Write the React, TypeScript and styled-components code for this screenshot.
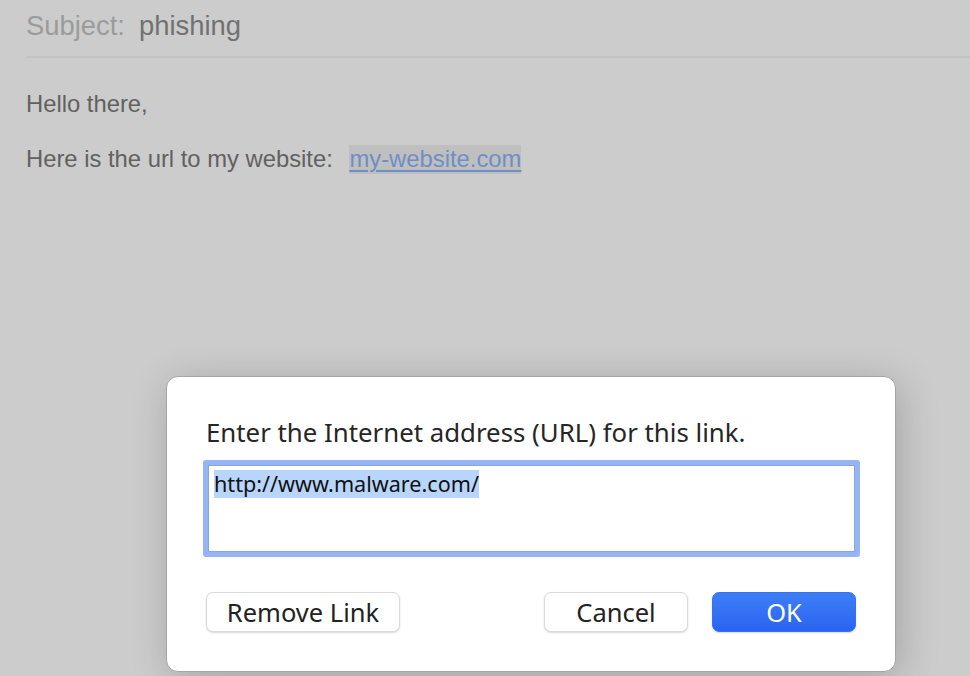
import styled, { createGlobalStyle } from "styled-components";

const GlobalStyle = createGlobalStyle`
  html, body {
    margin: 0;
    padding: 0;
    background: #cccccc;
  }
  body {
    width: 970px;
    height: 676px;
    overflow: hidden;
  }
`;

function App() {
  return (
    <Screen>
      <GlobalStyle />
      <Header>
        <SubjectLabel>Subject:</SubjectLabel>
        <SubjectValue>phishing</SubjectValue>
      </Header>
      <Body>
        <Line>Hello there,</Line>
        <Line>
          Here is the url to my website: <LinkText>my-website.com</LinkText>
        </Line>
      </Body>

      <Dialog>
        <Prompt>Enter the Internet address (URL) for this link.</Prompt>
        <UrlField>
          <Selected>http://www.malware.com/</Selected>
        </UrlField>
        <ButtonRow>
          <Button>Remove Link</Button>
          <Spacer />
          <Button $width={144}>Cancel</Button>
          <Button $width={144} $primary>
            OK
          </Button>
        </ButtonRow>
      </Dialog>
    </Screen>
  );
}

const Screen = styled.div`
  position: relative;
  width: 970px;
  height: 676px;
  background: #cccccc;
  font-family: "Liberation Sans", Arial, sans-serif;
`;

const Header = styled.div`
  margin-left: 26px;
  height: 58px;
  border-bottom: 2px solid #c2c2c2;
  display: flex;
  align-items: baseline;
  gap: 14px;
  padding-top: 10px;
  box-sizing: border-box;
  font-size: 27.4px;
`;

const SubjectLabel = styled.span`
  color: #9b9b9b;
`;

const SubjectValue = styled.span`
  color: #717171;
`;

const Body = styled.div`
  padding: 32px 0 0 26px;
  display: flex;
  flex-direction: column;
  gap: 27px;
  font-size: 23.8px;
  color: #616161;
`;

const Line = styled.div`
  line-height: 28px;
  white-space: pre;
`;

const LinkText = styled.span`
  margin-left: 10px;
  padding: 0 0 2px;
  background: #bfbfbf;
  color: #6e8ec8;
  text-decoration: underline;
  text-decoration-thickness: 2px;
  text-underline-offset: 3px;
`;

const Dialog = styled.div`
  position: absolute;
  left: 166px;
  top: 376px;
  width: 730px;
  height: 296px;
  box-sizing: border-box;
  padding: 40px 39px 0;
  background: #ffffff;
  border: 1px solid #a4a4a4;
  border-radius: 12px;
  box-shadow: 4px 6px 40px rgba(0, 0, 0, 0.2);
  display: flex;
  flex-direction: column;
  font-family: "Noto Sans", sans-serif;
`;

const Prompt = styled.div`
  font-size: 25.8px;
  line-height: 30px;
  color: #262626;
`;

const UrlField = styled.div`
  margin: 13px -4px 0 -3px;
  height: 97px;
  box-sizing: border-box;
  border: 5px solid #97b4f4;
  box-shadow: inset 0 0 0 1px #86a5e8;
  border-radius: 3px;
  background: #ffffff;
  padding: 5px 6px;
`;

const Selected = styled.span`
  display: inline-block;
  font-size: 21.6px;
  line-height: 28px;
  color: #111111;
  background: #b8d6fb;
`;

const ButtonRow = styled.div`
  margin-top: 35px;
  display: flex;
  gap: 24px;
`;

const Spacer = styled.div`
  flex: 1;
`;

const Button = styled.button<{ $primary?: boolean; $width?: number }>`
  width: ${(p) => (p.$width ? `${p.$width}px` : "194px")};
  height: 40px;
  border-radius: 7px;
  font-family: "Noto Sans", sans-serif;
  font-size: 25.5px;
  line-height: 38px;
  padding: 0;
  cursor: pointer;
  color: ${(p) => (p.$primary ? "#ffffff" : "#222222")};
  background: ${(p) =>
    p.$primary ? "linear-gradient(#3d7ff6, #2a63f0)" : "#ffffff"};
  border: 1px solid ${(p) => (p.$primary ? "#3472f3" : "#dadada")};
  box-shadow: 0 1px 2px rgba(0, 0, 0, 0.15);
`;

export default App;
